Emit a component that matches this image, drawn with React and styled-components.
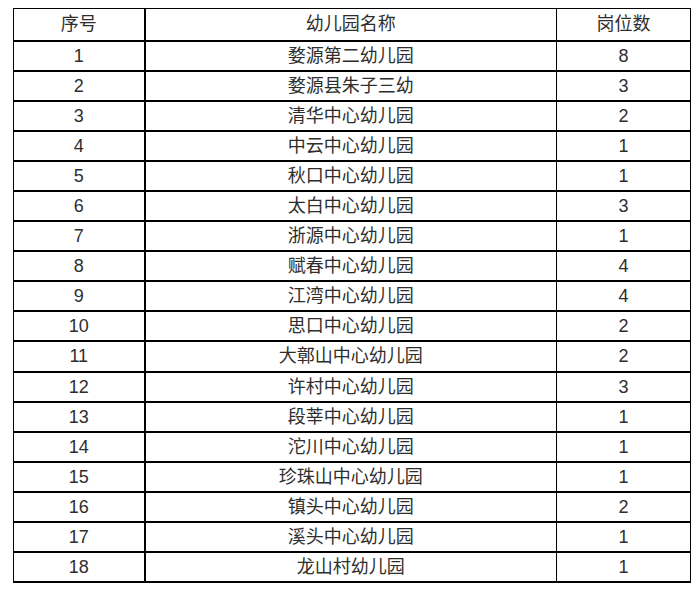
import React from "react";
import styled, { createGlobalStyle } from "styled-components";

const GlobalStyle = createGlobalStyle`
  html, body {
    margin: 0;
    padding: 0;
    background: #ffffff;
  }
  body {
    font-family: "Liberation Sans", "Noto Sans CJK SC", Arial, sans-serif;
  }
`;

const rows = [
  ["1", "婺源第二幼儿园", "8"],
  ["2", "婺源县朱子三幼", "3"],
  ["3", "清华中心幼儿园", "2"],
  ["4", "中云中心幼儿园", "1"],
  ["5", "秋口中心幼儿园", "1"],
  ["6", "太白中心幼儿园", "3"],
  ["7", "浙源中心幼儿园", "1"],
  ["8", "赋春中心幼儿园", "4"],
  ["9", "江湾中心幼儿园", "4"],
  ["10", "思口中心幼儿园", "2"],
  ["11", "大鄣山中心幼儿园", "2"],
  ["12", "许村中心幼儿园", "3"],
  ["13", "段莘中心幼儿园", "1"],
  ["14", "沱川中心幼儿园", "1"],
  ["15", "珍珠山中心幼儿园", "1"],
  ["16", "镇头中心幼儿园", "2"],
  ["17", "溪头中心幼儿园", "1"],
  ["18", "龙山村幼儿园", "1"],
];

// Styles
const Page = styled.div`
  padding: 8px 0 0 13px;
`;

const Table = styled.table`
  border-collapse: collapse;
  width: 677px;
  table-layout: fixed;
  color: #2e2e2e;
  font-size: 18px;
`;

const Row = styled.tr`
  height: ${(p) => (p.$head ? "32px" : "30.1px")};
`;

const Cell = styled.td`
  padding: 0;
  text-align: center;
  vertical-align: middle;
  line-height: 20px;
  border-top: ${(p) => (p.$first ? "1px" : "2px")} solid #000;
  border-bottom: ${(p) => (p.$last ? "2px" : "0")} solid #000;
  border-left: ${(p) => (p.$col === 1 ? "2px" : "1px")} solid #000;
  border-right: ${(p) => (p.$col === 2 ? "1px" : "0")} solid #000;
`;

const HeadCell = styled(Cell).attrs({ as: "th" })`
  font-weight: normal;
`;

const App = () => (
  <Page>
    <GlobalStyle />
    <Table>
      <colgroup>
        <col style={{ width: 131 }} />
        <col style={{ width: 412 }} />
        <col style={{ width: 134 }} />
      </colgroup>
      <thead>
        <Row $head>
          <HeadCell $first $col={0}>序号</HeadCell>
          <HeadCell $first $col={1}>幼儿园名称</HeadCell>
          <HeadCell $first $col={2}>岗位数</HeadCell>
        </Row>
      </thead>
      <tbody>
        {rows.map((r, i) => {
          const last = i === rows.length - 1;
          return (
            <Row key={r[0]}>
              {r.map((v, c) => (
                <Cell key={c} $col={c} $last={last}>
                  {v}
                </Cell>
              ))}
            </Row>
          );
        })}
      </tbody>
    </Table>
  </Page>
);

export default App;
